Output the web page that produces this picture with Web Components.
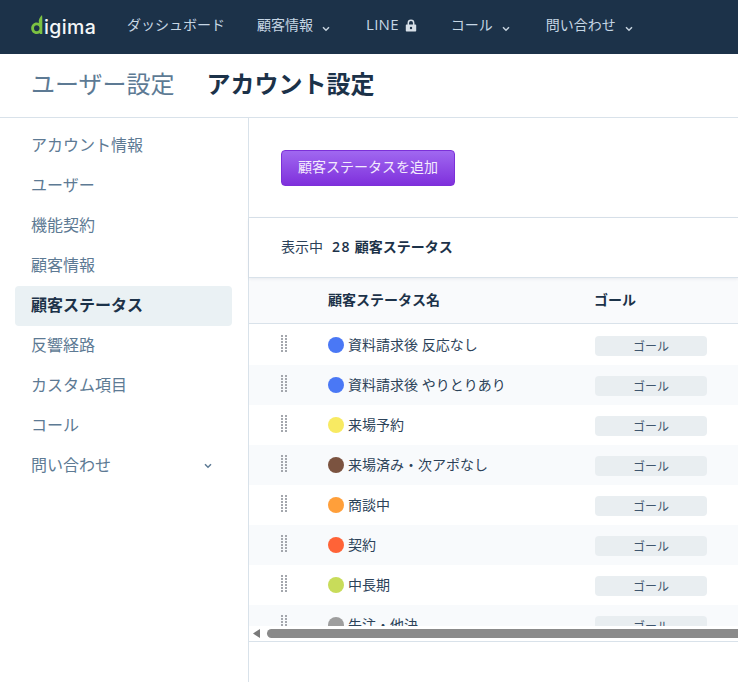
<!DOCTYPE html>
<html lang="ja">
<head>
<meta charset="utf-8">
<title>顧客ステータス</title>
<style>
  html, body { margin: 0; height: 100%; overflow: hidden; background: #fff; }
  body { font-family: "Open Sans", "Noto Sans CJK JP", sans-serif; color: #1c3249; }
</style>
</head>
<body>
<app-shell>
  <app-header slot="header">
    <top-link>ダッシュボード</top-link>
    <top-link gap="32" caret>顧客情報</top-link>
    <top-link gap="40" lock>LINE</top-link>
    <top-link gap="34" caret>コール</top-link>
    <top-link gap="40" caret>問い合わせ</top-link>
  </app-header>
  <page-tabs slot="tabs"></page-tabs>
  <side-nav slot="side">
    <side-item>アカウント情報</side-item>
    <side-item>ユーザー</side-item>
    <side-item>機能契約</side-item>
    <side-item>顧客情報</side-item>
    <side-item active>顧客ステータス</side-item>
    <side-item>反響経路</side-item>
    <side-item>カスタム項目</side-item>
    <side-item>コール</side-item>
    <side-item caret>問い合わせ</side-item>
  </side-nav>
  <status-panel slot="main">
    <status-row color="#4a78f5">資料請求後 反応なし</status-row>
    <status-row color="#4a78f5" striped>資料請求後 やりとりあり</status-row>
    <status-row color="#f8ea62">来場予約</status-row>
    <status-row color="#7b5340" striped>来場済み・次アポなし</status-row>
    <status-row color="#ff9f3a">商談中</status-row>
    <status-row color="#ff6337" striped>契約</status-row>
    <status-row color="#c8dc5a">中長期</status-row>
    <status-row color="#9e9e9e" striped>失注・他決</status-row>
  </status-panel>
</app-shell>

<script>
// chevron used by the top bar and the side menu
const caretSvg = (color) => `<svg width="8" height="6" viewBox="0 0 8 6"><path d="M1 1.2 4 4.2 7 1.2" fill="none" stroke="${color}" stroke-width="1.5"/></svg>`;

class AppShell extends HTMLElement {
  constructor() {
    super();
    this.attachShadow({ mode: 'open' }).innerHTML = `
      <style>
        :host { display: flex; flex-direction: column; width: 738px; height: 682px; overflow: hidden; }
        .body { flex: 1; display: flex; min-height: 0; }
      </style>
      <slot name="header"></slot>
      <slot name="tabs"></slot>
      <div class="body">
        <slot name="side"></slot>
        <slot name="main"></slot>
      </div>`;
  }
}
customElements.define('app-shell', AppShell);

class AppHeader extends HTMLElement {
  constructor() {
    super();
    this.attachShadow({ mode: 'open' }).innerHTML = `
      <style>
        :host { display: flex; align-items: center; height: 54px; background: #1c3249; padding-left: 31px; flex: none; }
        .logo { display: flex; align-items: flex-end; width: 96px; height: 34px; margin-bottom: 12px; box-sizing: border-box; }
        .logo svg { flex: none; margin-bottom: 3px; }
        .logo span { font: 500 19.5px/1 Inter, sans-serif; color: #f4f7f8; margin-left: 1px; letter-spacing: 0.4px; padding-bottom: 1px; }
      </style>
      <div class="logo">
        <svg width="12" height="20" viewBox="0 0 12 20">
          <path fill-rule="evenodd" fill="#7cc242" d="M11 0C11.400 2 11.300 3.400 11.300 5V19H8.800V18C7.900 18.700 6.900 19.100 5.700 19.100 2.600 19.100.2 16.600.2 13.300.2 10 2.600 7.500 5.700 7.500 6.700 7.500 7.500 7.700 7.900 8 7.200 5 8.700 2 11 0ZM5.700 10.300C4.100 10.300 3 11.600 3 13.300 3 15 4.100 16.300 5.700 16.300 7.300 16.300 8.500 15 8.500 13.300 8.500 11.600 7.300 10.300 5.700 10.300Z"/>
        </svg>
        <span>igima</span>
      </div>
      <slot></slot>`;
  }
}
customElements.define('app-header', AppHeader);

class TopLink extends HTMLElement {
  constructor() {
    super();
    const lock = this.hasAttribute('lock') ? `<svg class="lock" width="12" height="13" viewBox="0 0 12 13"><path d="M3.300 6V4a2.700 2.700 0 0 1 5.400 0v2" fill="none" stroke="#d7e0e8" stroke-width="1.500"/><path d="M1.500 5.500h9a.7.7 0 0 1 .7.7v5.600a.7.7 0 0 1-.7.7h-9a.7.7 0 0 1-.7-.7V6.200a.7.7 0 0 1 .7-.7Z" fill="#d7e0e8"/><circle cx="6" cy="9" r="1.200" fill="#1c3249"/></svg>` : '';
    const caret = this.hasAttribute('caret') ? `<span class="caret">${caretSvg('#c6d3de')}</span>` : '';
    this.attachShadow({ mode: 'open' }).innerHTML = `
      <style>
        :host { display: inline-flex; align-items: center; font-size: ${this.hasAttribute('lock') ? 15 : 14}px; color: #c6d6e4; margin-left: ${this.getAttribute('gap') || 0}px; margin-bottom: 6px; white-space: nowrap; ${this.hasAttribute('lock') ? 'letter-spacing: .3px;' : ''} }
        .caret { display: inline-flex; margin-left: 9px; margin-right: -4px; padding-top: 9px; width: 8px; }
        .lock { margin-left: 6px; margin-top: 3px; }
      </style>
      <slot></slot>${lock}${caret}`;
  }
}
customElements.define('top-link', TopLink);

class PageTabs extends HTMLElement {
  constructor() {
    super();
    this.attachShadow({ mode: 'open' }).innerHTML = `
      <style>
        :host { display: flex; align-items: center; gap: 32px; flex: none; box-sizing: border-box; height: 64px; padding: 0 0 4px 31px; font-size: 24px; line-height: 1; color: #5d7a94; border-bottom: 1px solid #d9e2ea; }
        b { color: #1c3249; font-weight: 700; }
      </style>
      <span>ユーザー設定</span><b>アカウント設定</b>`;
  }
}
customElements.define('page-tabs', PageTabs);

class SideNav extends HTMLElement {
  constructor() {
    super();
    this.attachShadow({ mode: 'open' }).innerHTML = `
      <style>
        :host { display: block; flex: none; box-sizing: border-box; width: 249px; padding: 8px 16px 0 15px; border-right: 1px solid #d9e2ea; }
      </style>
      <slot></slot>`;
  }
}
customElements.define('side-nav', SideNav);

class SideItem extends HTMLElement {
  constructor() {
    super();
    const active = this.hasAttribute('active');
    const caret = this.hasAttribute('caret') ? caretSvg('#5d7a94') : '';
    this.attachShadow({ mode: 'open' }).innerHTML = `
      <style>
        :host { display: flex; align-items: center; justify-content: space-between; box-sizing: border-box; height: 40px; padding: 0 20px 4px 16px; border-radius: 4px; font-size: 16px;
          color: ${active ? '#1c3249' : '#5d7a94'}; font-weight: ${active ? 700 : 400}; background: ${active ? '#eaf1f4' : 'transparent'}; }
        svg { margin-top: 4px; }
      </style>
      <span><slot></slot></span>${caret}`;
  }
}
customElements.define('side-item', SideItem);

class StatusPanel extends HTMLElement {
  constructor() {
    super();
    this.attachShadow({ mode: 'open' }).innerHTML = `
      <style>
        :host { display: flex; flex-direction: column; flex: 1; min-width: 0; }
        .actions { flex: none; height: 100px; padding: 32px 0 0 32px; box-sizing: border-box; border-bottom: 1px solid #d9e2ea; }
        button { display: block; box-sizing: border-box; width: 174px; height: 36px; padding: 0 0 4px; border: 1px solid #7c30d8; border-radius: 4px; font: inherit; font-size: 14px; color: #f3ebfd;
          background: linear-gradient(#a068f0, #7f30dc); }
        .count { flex: none; display: flex; align-items: center; height: 60px; box-sizing: border-box; padding: 0 0 4px 32px; font-size: 14px; color: #2c4259; border-bottom: 1px solid #d9e2ea; box-shadow: 0 1px 3px rgba(28,50,73,.08); position: relative; }
        .count b { margin-left: 9px; color: #1c3249; font-weight: 600; }
        .count i { font-style: normal; letter-spacing: 1.500px; }
        .head { flex: none; display: flex; align-items: center; height: 46px; box-sizing: border-box; padding-bottom: 4px; background: #f9fafc; border-bottom: 1px solid #d9e2ea; font-size: 14px; font-weight: 700; color: #1c3249; }
        .head .name { margin-left: 79px; width: 266px; }
        .rows { flex: none; height: 302px; padding-top: 1px; box-sizing: border-box; overflow: hidden; }
        .bar { flex: none; display: flex; align-items: center; height: 16px; padding-left: 4px; box-sizing: border-box; border-bottom: 1px solid #d9e2ea; }
        .bar svg { flex: none; }
        .thumb { flex: 1; height: 9px; margin-left: 7px; border-radius: 5px 0 0 5px; background: #8a8a8a; }
      </style>
      <div class="actions"><button type="button">顧客ステータスを追加</button></div>
      <div class="count">表示中<b><i>28</i> 顧客ステータス</b></div>
      <div class="head"><span class="name">顧客ステータス名</span><span>ゴール</span></div>
      <div class="rows"><slot></slot></div>
      <div class="bar"><svg width="7" height="9" viewBox="0 0 7 9"><path d="M7 0V9L0 4.500Z" fill="#7a7a7a"/></svg><div class="thumb"></div></div>`;
  }
}
customElements.define('status-panel', StatusPanel);

class StatusRow extends HTMLElement {
  constructor() {
    super();
    let dots = '';
    for (let y = 0; y < 6; y++) {
      dots += `<rect x="0" y="${y * 3}" width="2" height="2"/><rect x="4" y="${y * 3}" width="2" height="2"/>`;
    }
    this.attachShadow({ mode: 'open' }).innerHTML = `
      <style>
        :host { display: flex; align-items: center; height: 40px; font-size: 14px; color: #2c4259; background: ${this.hasAttribute('striped') ? '#f8fafc' : '#fff'}; }
        .grip { flex: none; margin-left: 32px; width: 47px; height: 18px; margin-bottom: 2px; fill: #a4a7ad; }
        .grip svg { display: block; }
        .dot { flex: none; width: 16px; height: 16px; border-radius: 50%; background: ${this.getAttribute('color')}; margin-right: 4px; }
        .name { flex: none; width: 247px; white-space: nowrap; padding-bottom: 2px; }
        .goal { flex: none; width: 112px; height: 20px; margin-top: 2px; border-radius: 4px; background: #e9eef1; text-align: center; font-size: 12px; line-height: 21px; color: #3f566e; }
      </style>
      <div class="grip"><svg width="6" height="17" viewBox="0 0 6 17">${dots}</svg></div>
      <span class="dot"></span>
      <span class="name"><slot></slot></span>
      <span class="goal">ゴール</span>`;
  }
}
customElements.define('status-row', StatusRow);
</script>
</body>
</html>
